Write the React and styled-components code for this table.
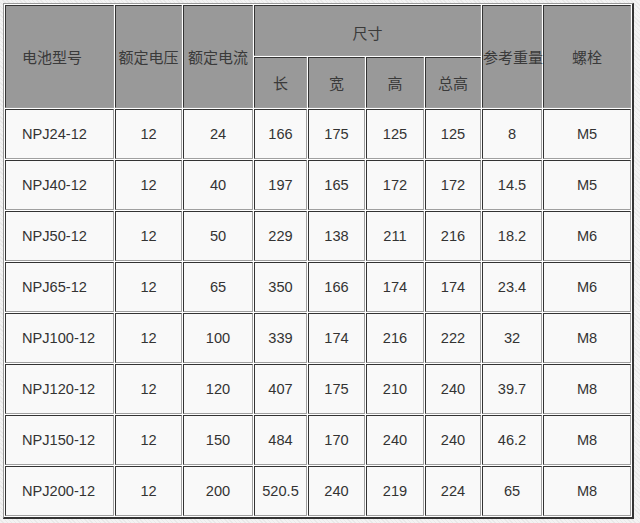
import styled, { createGlobalStyle } from "styled-components";

const GlobalStyle = createGlobalStyle`
  html, body {
    margin: 0;
    padding: 0;
  }
  body {
    padding: 3px 0 0 3px;
    background-color: #efefef;
    background-image: repeating-linear-gradient(
      45deg,
      #f3f3f3 0px,
      #f3f3f3 2px,
      #e9e9e9 2px,
      #e9e9e9 3px
    );
    font-family: "Liberation Sans", "Noto Sans CJK SC", sans-serif;
    height: 523px;
    box-sizing: border-box;
  }
`;

const Table = styled.table`
  box-sizing: border-box;
  width: 631px;
  border-collapse: separate;
  border-spacing: 1px;
  table-layout: fixed;
  background: #fff;
  border-style: solid;
  border-width: 1px 2px 2px 1px;
  border-color: #9a9a9a #333 #333 #9a9a9a;
  color: #333;
  font-size: 14.6px;
`;

const Cell = styled.td`
  box-sizing: border-box;
  padding: 0;
  height: ${(p) => p.$h || 50}px;
  border-style: solid;
  border-width: 1px;
  border-color: #333 #a0a0a0 #a0a0a0 #333;
  text-align: ${(p) => (p.$left ? "left" : "center")};
  padding-left: ${(p) => (p.$left ? "16px" : "0")};
  background: #f9f9f9;
  white-space: nowrap;
`;

const HeadCell = styled(Cell).attrs({ as: "th" })`
  background: #999;
  font-weight: normal;
  font-size: 15px;
  color: #3a3a3a;
  height: ${(p) => p.$h || 51}px;
  padding-top: ${(p) => (p.$top ? "3px" : "0")};
`;

const widths = [109, 67, 70, 53, 57, 58, 56, 60, 88];

const rows = [
  ["NPJ24-12", "12", "24", "166", "175", "125", "125", "8", "M5"],
  ["NPJ40-12", "12", "40", "197", "165", "172", "172", "14.5", "M5"],
  ["NPJ50-12", "12", "50", "229", "138", "211", "216", "18.2", "M6"],
  ["NPJ65-12", "12", "65", "350", "166", "174", "174", "23.4", "M6"],
  ["NPJ100-12", "12", "100", "339", "174", "216", "222", "32", "M8"],
  ["NPJ120-12", "12", "120", "407", "175", "210", "240", "39.7", "M8"],
  ["NPJ150-12", "12", "150", "484", "170", "240", "240", "46.2", "M8"],
  ["NPJ200-12", "12", "200", "520.5", "240", "219", "224", "65", "M8"],
];

// Battery spec table
function App() {
  return (
    <>
      <GlobalStyle />
      <Table>
        <colgroup>
          {widths.map((w, i) => (
            <col key={i} style={{ width: w }} />
          ))}
        </colgroup>
        <thead>
          <tr>
            <HeadCell rowSpan={2} $left $h={103}>
              电池型号
            </HeadCell>
            <HeadCell rowSpan={2}>额定电压</HeadCell>
            <HeadCell rowSpan={2}>额定电流</HeadCell>
            <HeadCell colSpan={4} $top>
              尺寸
            </HeadCell>
            <HeadCell rowSpan={2}>参考重量</HeadCell>
            <HeadCell rowSpan={2}>螺栓</HeadCell>
          </tr>
          <tr>
            <HeadCell>长</HeadCell>
            <HeadCell>宽</HeadCell>
            <HeadCell>高</HeadCell>
            <HeadCell>总高</HeadCell>
          </tr>
        </thead>
        <tbody>
          {rows.map((r) => (
            <tr key={r[0]}>
              {r.map((v, i) => (
                <Cell key={i} $left={i === 0}>
                  {v}
                </Cell>
              ))}
            </tr>
          ))}
        </tbody>
      </Table>
    </>
  );
}

export default App;
